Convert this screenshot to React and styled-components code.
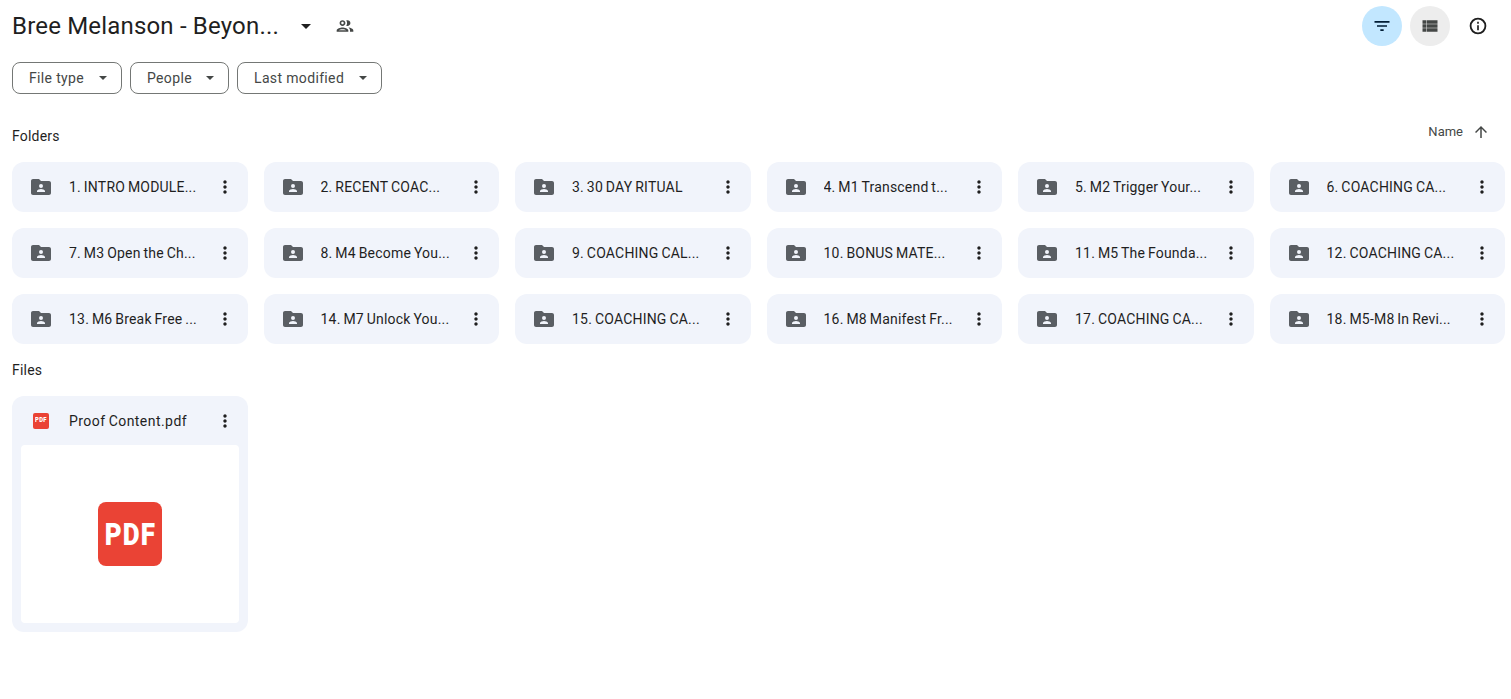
import React from "react";
import styled, { createGlobalStyle } from "styled-components";

const GlobalStyle = createGlobalStyle`
  html, body {
    margin: 0;
    padding: 0;
    background: #fff;
    font-family: Roboto, "Liberation Sans", sans-serif;
    color: #1f1f1f;
  }
`;

const Page = styled.div`
  width: 1511px;
  height: 699px;
  box-sizing: border-box;
  padding: 6px 6px 0 12px;
  overflow: hidden;
`;

const Header = styled.div`
  display: flex;
  align-items: center;
  justify-content: space-between;
  height: 40px;
`;

const TitleWrp = styled.div`
  display: flex;
  align-items: center;
`;

const Title = styled.h1`
  margin: 0;
  font-size: 24px;
  font-weight: 400;
  line-height: 40px;
  letter-spacing: 0.18px;
  width: 289px;
  white-space: nowrap;
`;

const ActionIcon = styled.span`
  display: flex;
  margin-left: ${({ $ml }) => $ml || 0}px;
  color: #444746;
`;

const HeaderActions = styled.div`
  display: flex;
  gap: 8px;
  margin-right: 7px;
`;

const RoundBtn = styled.span`
  display: flex;
  align-items: center;
  justify-content: center;
  width: 40px;
  height: 40px;
  border-radius: 50%;
  background: ${({ $bg }) => $bg || "transparent"};
  color: ${({ $color }) => $color || "#1f1f1f"};
`;

const FilterRow = styled.div`
  display: flex;
  gap: 8px;
  margin-top: 16px;
`;

const FilterChip = styled.div`
  display: flex;
  align-items: center;
  justify-content: space-between;
  box-sizing: border-box;
  width: ${({ $w }) => $w}px;
  height: 32px;
  padding: 0 14px 0 16px;
  border: 1px solid #747775;
  border-radius: 8px;
  font-size: 14px;
  color: #444746;
  letter-spacing: 0.35px;
`;

const Caret = styled.span`
  width: 0;
  height: 0;
  border-left: ${({ $size }) => $size || 4}px solid transparent;
  border-right: ${({ $size }) => $size || 4}px solid transparent;
  border-top: ${({ $size }) => $size || 4}px solid ${({ $color }) => $color || "#444746"};
`;

const FoldersHead = styled.div`
  display: flex;
  align-items: flex-start;
  justify-content: space-between;
  margin-top: 24px;
  height: 44px;
`;

const SectionLabel = styled.div`
  font-size: 14px;
  line-height: 20px;
  letter-spacing: 0.2px;
  color: #1f1f1f;
  padding-top: ${({ $pt }) => $pt || 0}px;
`;

const SortBox = styled.div`
  display: flex;
  align-items: center;
  gap: 9px;
  margin-right: 15px;
  padding-top: 2px;
  font-size: 13px;
  line-height: 24px;
  color: #444746;
`;

const Grid = styled.div`
  display: grid;
  grid-template-columns: repeat(6, 1fr);
  gap: 16px;
`;

const FolderCard = styled.div`
  display: flex;
  align-items: center;
  height: 50px;
  padding: 0 3px 0 17px;
  border-radius: 12px;
  background: #f1f4fb;
`;

const CardName = styled.span`
  flex: 1;
  margin-left: 16px;
  font-size: 14px;
  letter-spacing: ${({ $spacing }) => $spacing || 0.2}px;
  word-spacing: -0.8px;
  color: #1f1f1f;
  white-space: nowrap;
  overflow: hidden;
`;

const CardIcon = styled.span`
  display: flex;
  flex: none;
  color: #5a5e63;
`;

const MoreBtn = styled.span`
  display: flex;
  align-items: center;
  justify-content: center;
  flex: none;
  width: 40px;
  height: 40px;
  color: #1f1f1f;
`;

const FilesLabel = styled(SectionLabel)`
  margin-top: 16px;
`;

const FileCard = styled.div`
  display: flex;
  flex-direction: column;
  box-sizing: border-box;
  width: 236px;
  height: 236px;
  margin-top: 16px;
  padding: 0 9px 9px;
  border-radius: 12px;
  background: #f1f4fb;
`;

const FileHead = styled.div`
  display: flex;
  align-items: center;
  height: 49px;
  padding-left: 9px;
  margin-right: -6px;
`;

const Preview = styled.div`
  flex: 1;
  display: flex;
  align-items: center;
  justify-content: center;
  border-radius: 4px;
  background: #fff;
`;

const PdfBadge = styled.span`
  display: flex;
  flex: none;
  align-items: center;
  justify-content: center;
  width: 64px;
  height: 64px;
  border-radius: 8px;
  background: #ea4335;
  color: #fff;
`;

const SmallPdf = styled(PdfBadge)`
  width: 16px;
  height: 16px;
  border-radius: 2px;
  margin: 0 4px 0 3px;
`;

const PdfText = styled.span`
  font-family: Roboto, sans-serif;
  font-weight: 900;
  font-size: ${({ $small }) => ($small ? 7 : 31)}px;
  line-height: 1;
  letter-spacing: ${({ $small }) => ($small ? 0.3 : 1.2)}px;
  transform: scaleX(0.84);
`;

const Glyph = ({ d, size = 24 }) => (
  <svg width={size} height={size} viewBox="0 0 24 24" fill="currentColor">
    <path d={d} />
  </svg>
);

const ICONS = {
  people:
    "M9 13.75c-2.34 0-7 1.17-7 3.5V19h14v-1.75c0-2.33-4.66-3.5-7-3.5zM4.34 17c.84-.58 2.87-1.25 4.66-1.25s3.82.67 4.66 1.25H4.34zM9 12c1.93 0 3.5-1.57 3.5-3.5S10.93 5 9 5 5.5 6.57 5.5 8.5 7.07 12 9 12zm0-5c.83 0 1.5.67 1.5 1.5S9.83 10 9 10s-1.5-.67-1.5-1.5S8.17 7 9 7zm7.04 6.81c1.16.84 1.96 1.96 1.96 3.44V19h4v-1.75c0-2.02-3.5-3.17-5.96-3.44zM15 12c1.93 0 3.5-1.57 3.5-3.5S16.93 5 15 5c-.54 0-1.04.13-1.5.35.63.89 1 1.98 1 3.15s-.37 2.26-1 3.15c.46.22.96.35 1.5.35z",
  filter: "M10 18h4v-2h-4v2zM3 6v2h18V6H3zm3 7h12v-2H6v2z",
  list: "M3 5h4.7v4.4H3zm5.3 0H21v4.4H8.3zM3 10h4.7v4H3zm5.3 0H21v4H8.3zM3 14.6h4.7V19H3zm5.3 0H21V19H8.3z",
  info: "M12 2a10 10 0 1 0 0 20 10 10 0 0 0 0-20zm0 2.2a7.8 7.8 0 1 1 0 15.6 7.8 7.8 0 0 1 0-15.6zM11 7h2v2.2h-2zm0 4h2v6h-2z",
  arrowUp: "M4 12l1.41 1.41L11 7.83V20h2V7.83l5.58 5.59L20 12l-8-8-8 8z",
  more: "M12 8c1.1 0 2-.9 2-2s-.9-2-2-2-2 .9-2 2 .9 2 2 2zm0 2c-1.1 0-2 .9-2 2s.9 2 2 2 2-.9 2-2-.9-2-2-2zm0 6c-1.1 0-2 .9-2 2s.9 2 2 2 2-.9 2-2-.9-2-2-2z",
  folder:
    "M20 6h-8l-2-2H4c-1.1 0-1.99.9-1.99 2L2 18c0 1.1.9 2 2 2h16c1.1 0 2-.9 2-2V8c0-1.1-.9-2-2-2zm-8 3a2 2 0 1 1 0 4 2 2 0 0 1 0-4zm4 8H8v-1c0-1.33 2.67-2 4-2s4 .67 4 2v1z",
};

const filters = [
  { label: "File type", w: 110 },
  { label: "People", w: 99 },
  { label: "Last modified", w: 145 },
];

const folders = [
  "1. INTRO MODULE...",
  "2. RECENT COAC...",
  "3. 30 DAY RITUAL",
  "4. M1 Transcend t...",
  "5. M2 Trigger Your...",
  "6. COACHING CA...",
  "7. M3 Open the Ch...",
  "8. M4 Become You...",
  "9. COACHING CAL...",
  "10. BONUS MATE...",
  "11. M5 The Founda...",
  "12. COACHING CA...",
  "13. M6 Break Free ...",
  "14. M7 Unlock You...",
  "15. COACHING CA...",
  "16. M8 Manifest Fr...",
  "17. COACHING CA...",
  "18. M5-M8 In Revi...",
];

const App = () => {
  return (
    <Page>
      <GlobalStyle />
      <Header>
        <TitleWrp>
          <Title>Bree Melanson - Beyon...</Title>
          <Caret $size={5} $color="#1f1f1f" />
          <ActionIcon $ml={24}>
            <Glyph d={ICONS.people} size={20} />
          </ActionIcon>
        </TitleWrp>
        <HeaderActions>
          <RoundBtn $bg="#c2e7ff" $color="#001d35">
            <Glyph d={ICONS.filter} size={20} />
          </RoundBtn>
          <RoundBtn $bg="#ededed" $color="#444746">
            <Glyph d={ICONS.list} size={20} />
          </RoundBtn>
          <RoundBtn>
            <Glyph d={ICONS.info} size={20} />
          </RoundBtn>
        </HeaderActions>
      </Header>

      <FilterRow>
        {filters.map((f) => (
          <FilterChip key={f.label} $w={f.w}>
            {f.label}
            <Caret />
          </FilterChip>
        ))}
      </FilterRow>

      <FoldersHead>
        <SectionLabel $pt={8}>Folders</SectionLabel>
        <SortBox>
          Name
          <Glyph d={ICONS.arrowUp} size={18} />
        </SortBox>
      </FoldersHead>

      <Grid>
        {folders.map((name) => (
          <FolderCard key={name}>
            <CardIcon>
              <Glyph d={ICONS.folder} />
            </CardIcon>
            <CardName>{name}</CardName>
            <MoreBtn>
              <Glyph d={ICONS.more} size={20} />
            </MoreBtn>
          </FolderCard>
        ))}
      </Grid>

      <FilesLabel>Files</FilesLabel>
      <FileCard>
        <FileHead>
          <SmallPdf>
            <PdfText $small>PDF</PdfText>
          </SmallPdf>
          <CardName $spacing={0.45}>Proof Content.pdf</CardName>
          <MoreBtn>
            <Glyph d={ICONS.more} size={20} />
          </MoreBtn>
        </FileHead>
        <Preview>
          <PdfBadge>
            <PdfText>PDF</PdfText>
          </PdfBadge>
        </Preview>
      </FileCard>
    </Page>
  );
};

export default App;
